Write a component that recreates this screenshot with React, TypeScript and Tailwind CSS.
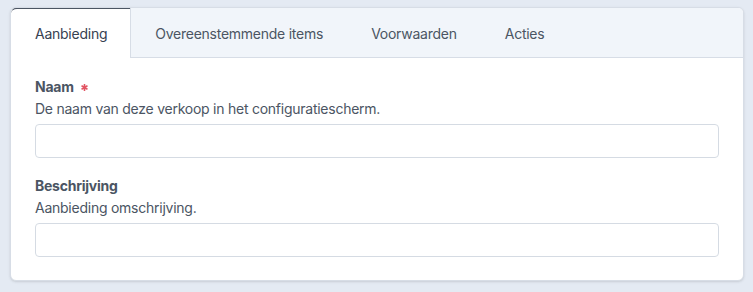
import React from "react";

const tabs = ["Aanbieding", "Overeenstemmende items", "Voorwaarden", "Acties"];

function Asterisk() {
  return (
    <svg className="ml-[7px] h-[7px] w-[7px]" viewBox="0 0 10 10" aria-hidden="true">
      <g stroke="#e25563" strokeWidth="2.4" strokeLinecap="round">
        <line x1="5" y1="1" x2="5" y2="9" />
        <line x1="1.5" y1="3" x2="8.5" y2="7" />
        <line x1="1.5" y1="7" x2="8.5" y2="3" />
      </g>
    </svg>
  );
}

function Field({ label, help, required }: { label: string; help: string; required?: boolean }) {
  return (
    <div>
      <div className="flex items-center text-sm font-bold leading-5 text-[#4b5563]">
        {label}
        {required && <Asterisk />}
      </div>
      <p className="mt-0.5 text-sm leading-5 text-[#4b5563]">{help}</p>
      <input
        type="text"
        className="mt-[5px] block h-[34px] w-full rounded border border-[#d5dbe3] bg-white px-3 text-sm outline-none"
      />
    </div>
  );
}

export default function App() {
  return (
    <div
      className="min-h-[292px] w-full bg-[#e4eaf3] pl-[10px] pt-[7px] tracking-[-0.25px]"
      style={{ fontFamily: "Inter, 'Noto Sans', sans-serif" }}
    >
      <div className="w-[734px] overflow-hidden rounded-md border border-[#d7dde6] bg-white shadow-sm">
        <div className="flex h-[50px] border-b border-[#d7dde6] bg-[#f1f5fa]">
          {tabs.map((tab, i) =>
            i === 0 ? (
              <div
                key={tab}
                className="-mb-px -mt-px flex h-[51px] items-start rounded-tl-md border-r border-t-2 border-r-[#d7dde6] border-t-[#4b5563] bg-white pl-6 pr-[23px] pt-[15px] text-sm leading-5 text-[#374151]"
              >
                {tab}
              </div>
            ) : (
              <div key={tab} className="flex items-start px-6 pt-4 text-sm leading-5 text-[#4b5563]">
                {tab}
              </div>
            )
          )}
        </div>
        <div className="px-6 pb-[23px] pt-[19px]">
          <Field label="Naam" help="De naam van deze verkoop in het configuratiescherm." required />
          <div className="mt-[18px]">
            <Field label="Beschrijving" help="Aanbieding omschrijving." />
          </div>
        </div>
      </div>
    </div>
  );
}
